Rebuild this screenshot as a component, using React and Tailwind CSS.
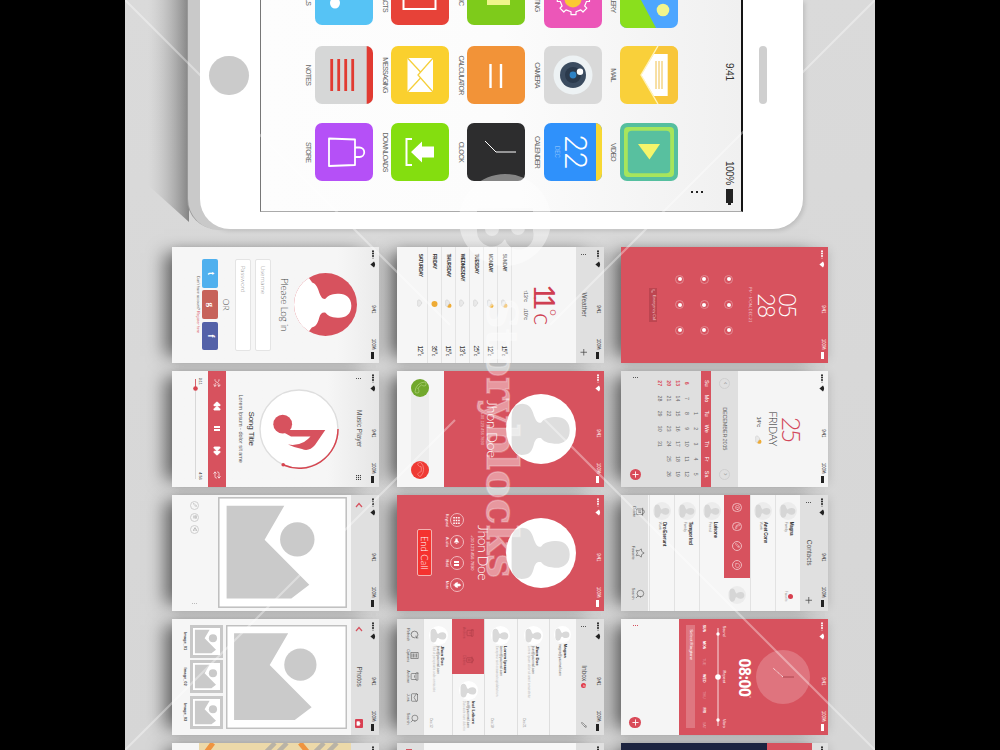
import React from "react";
import { Trash2, Star, Search, RotateCw, Archive, Mail, Pencil, Shuffle, Rewind, FastForward, Repeat, Phone, Info, MessageCircle, Mic, Camera, Share2 } from "lucide-react";

const RED = "#d7525e";

/* ---------- tablet ---------- */

function AppIcon({ label, bg, first, children }) {
  return (
    <div className={"flex h-[76.3px] w-[58px] flex-col items-center " + (first || "")}>
      <div className={"h-[58px] w-[58px] shrink-0 overflow-hidden rounded-[7px] " + bg}>
        <svg viewBox="0 0 58 58" className="block h-[58px] w-[58px]">{children}</svg>
      </div>
      <div className="flex h-[12px] items-center whitespace-nowrap text-[7px] leading-none tracking-[-0.75px] text-[#666]">{label}</div>
    </div>
  );
}

function TabletApps() {
  return (
    <div className="ml-[-31px] grid grid-cols-[77px_77px_58px]">
      <AppIcon label="GALLERY" bg="bg-[#4da6ff]" first="ml-px">
        <path d="M0 52 L30 37 L58 22 V58 H0Z" fill="#8adf1d" /><circle cx="40" cy="15" r="6.3" fill="#f2f58c" />
      </AppIcon>
      <AppIcon label="MAIL" bg="bg-[#f9d03a]">
        <path d="M0 0H58V19.5L29 37L0 19.5Z" fill="#f8c63a" />
        <path d="M0 20 L29 37 L58 20" fill="none" stroke="#fff3b8" strokeWidth="1.4" />
        <path d="M8 10.3H50V24L29 36.5L8 24Z" fill="#fff" />
        <path d="M15 16H43M15 19H43M15 22H43" stroke="#efc04a" strokeWidth="1" />
      </AppIcon>
      <AppIcon label="VIDEO" bg="bg-[#55bf9f]">
        <rect x="4" y="4" width="50" height="50" rx="4" fill="#a7e55c" />
        <rect x="7.8" y="7.8" width="42.4" height="42.4" rx="4" fill="#58c09f" />
        <path d="M21 18L36.5 28.5L21 40Z" fill="#f4f56a" />
      </AppIcon>
      <AppIcon label="SETTING" bg="bg-[#ec56b8]" first="ml-px">
        <circle cx="29" cy="29" r="8.5" fill="#fbc834" />
        <path d="M26.500 15.500V12.500H31.500V15.500L36 17.300L38.200 15.200L42 19L39.900 21.200L41.700 26H44.700V31H41.700L39.900 36L42 38.200L38.200 42L36 39.900L31.500 41.700V44.700H26.500V41.700L22 39.900L19.800 42L16 38.200L18.100 36L16.300 31H13.300V26H16.300L18.100 21.200L16 19L19.800 15.200L22 17.300Z" fill="none" stroke="#fff" strokeWidth="1.2" strokeLinejoin="round" />
      </AppIcon>
      <AppIcon label="CAMERA" bg="bg-[#d9d9d9]">
        <circle cx="29" cy="29" r="19.5" fill="#edf2f4" /><circle cx="29" cy="29" r="13" fill="#3b4c60" />
        <circle cx="29" cy="29" r="8" fill="#2b3a4c" /><circle cx="29" cy="29" r="3.4" fill="#2d82c4" /><circle cx="25.7" cy="22" r="3.2" fill="#fff" />
      </AppIcon>
      <AppIcon label="CALENDER" bg="bg-[#2f91fb]">
        <rect width="58" height="6" fill="#f7d833" />
        <text x="12" y="37" fontFamily="Roboto" fontWeight="300" fontSize="32" textLength="34" lengthAdjust="spacingAndGlyphs" fill="#fff">22</text>
        <text x="23" y="47.500" fontFamily="Roboto" fontWeight="300" fontSize="7" textLength="12" lengthAdjust="spacingAndGlyphs" fill="#a6d0ff">DEC</text>
      </AppIcon>
      <AppIcon label="MUSIC" bg="bg-[#7ecb1b]" first="-ml-0.5">
        <path d="M24 15H38V20H30V35A5 5 0 1 1 24 30Z" fill="#eef58c" /><path d="M30 18H38V38H30Z" fill="#eef58c" />
      </AppIcon>
      <AppIcon label="CALCULATOR" bg="bg-[#f29338]">
        <path d="M18 24H42M18 34.5H42" stroke="#fff" strokeWidth="2.4" />
      </AppIcon>
      <AppIcon label="CLOCK" bg="bg-[#2d2d2e]">
        <path d="M18 40L29 29V9" stroke="#fff" strokeWidth="1" fill="none" />
      </AppIcon>
      <AppIcon label="CONTACTS" bg="bg-[#e74238]" first="-ml-0.5">
        <rect x="12" y="13.5" width="30" height="32" fill="none" stroke="#fff" strokeWidth="2" />
      </AppIcon>
      <AppIcon label="MESSAGING" bg="bg-[#fad02e]">
        <rect x="12" y="16" width="34" height="25.5" fill="#fff" />
        <path d="M12 16L29 31L46 16M12 41.5L26 28.5M46 41.5L32 28.5" stroke="#f5cf3c" strokeWidth="1.3" fill="none" />
      </AppIcon>
      <AppIcon label="DOWNLOADS" bg="bg-[#84de0f]">
        <path d="M16 37V42.5H42V37" stroke="#fff" strokeWidth="2" fill="none" />
        <path d="M23.5 15H34.5V27H39.5L29 38L18.500 27H23.500Z" fill="#fff" />
      </AppIcon>
      <AppIcon label="CALLS" bg="bg-[#56c3f5]" first="-ml-0.5">
        <ellipse cx="36" cy="38" rx="5.500" ry="5" fill="#fff" /><path d="M20 18Q20 34 33 40" stroke="#fff" strokeWidth="6" fill="none" />
      </AppIcon>
      <AppIcon label="NOTES" bg="bg-[#d6d7d7]">
        <rect width="58" height="6.3" fill="#e13a31" />
        <path d="M13 20.3H45M13 27.3H45M13 34.3H45M13 41.3H45" stroke="#e13a31" strokeWidth="2.8" />
      </AppIcon>
      <AppIcon label="STORE" bg="bg-[#b550f7]">
        <path d="M16.5 18H42L43 44H15.500Z" stroke="#fff" strokeWidth="1.8" fill="none" strokeLinejoin="round" />
        <path d="M24.500 18V13.500A4.700 4.700 0 0 1 34 13.500V18" stroke="#fff" strokeWidth="1.8" fill="none" />
      </AppIcon>
    </div>
  );
}

function Tablet() {
  return (
    <div className="h-[603px] w-[229px] rounded-r-[30px] bg-white shadow-[0_11px_0_1px_#c9c9c9,0_13px_0_0_#999,2px_-2px_4px_rgba(0,0,0,0.12)]">
      <div className="h-[60px] pt-[36px]">
        <div className="ml-[46px] h-[8px] w-[58px] rounded-full bg-[#cfcfcf]" />
      </div>
      <div className="h-[483px] w-[212px] overflow-hidden border-t-2 border-r border-b border-t-[#151515] border-r-[#aaa] border-b-[#777] bg-gradient-to-t from-[#fdfdfd] via-[#fcfcfc] to-[#f0f0f0]">
        <div className="flex h-[20px] items-center pt-[3px] pl-[63px] text-[10px] leading-none tracking-[-0.5px] text-[#333]">
          <span className="w-[98px]">9:41</span>
          <span className="w-[28px]">100%</span>
          <span className="h-[7px] w-[14px] bg-[#222]" /><span className="h-[3px] w-[2px] bg-[#222]" />
        </div>
        <div className="flex h-[43px] flex-col gap-[2.4px] pt-[18px] pl-[191px]">
          <i className="block h-[2.4px] w-[2.4px] bg-[#222]" /><i className="block h-[2.4px] w-[2.4px] bg-[#222]" /><i className="block h-[2.4px] w-[2.4px] bg-[#222]" />
        </div>
        <TabletApps />
      </div>
      <div className="ml-[55.5px] mt-[11px] h-[39.5px] w-[39.5px] rounded-full bg-[#cbcbcb]" />
    </div>
  );
}

/* ---------- shared phone parts ---------- */

function Status({ light }) {
  return (
    <div className={"flex h-[12px] shrink-0 items-center pr-[4px] pl-[3px] text-[4.5px] leading-none tracking-[-0.15px] " + (light ? "text-white" : "text-[#222]")}>
      <svg viewBox="0 0 18 6" className="h-[6px] w-[18px]" fill="currentColor">
        <circle cx="1.2" cy="3" r="1" /><circle cx="3.6" cy="3" r="1" /><circle cx="6" cy="3" r="1" /><circle cx="8.2" cy="3" r=".7" opacity=".5" />
        <path d="M11.5 2Q14.5 -.2 17.5 2L14.5 5.6Z" />
      </svg>
      <span className="flex-1 pl-[12px] text-center">9:41</span>
      <span className="pr-[2px]">100%</span>
      <span className={"h-[3px] w-[7px] " + (light ? "bg-white" : "bg-[#222]")} />
    </div>
  );
}

function Screen({ bg, light, children }) {
  return (
    <div className={"relative flex h-[207px] w-[116px] flex-col overflow-hidden font-['Liberation_Sans',sans-serif] " + bg}>
      <Status light={light} />
      {children}
    </div>
  );
}

function Slot({ children }) {
  return <div className="h-[207px] w-[115.5px] shadow-[0_14px_16px_-6px_rgba(0,0,0,0.5),0_-2px_10px_-2px_rgba(0,0,0,0.15)]">{children}</div>;
}

function Dots({ color = "bg-[#555]" }) {
  return (
    <div className="flex flex-col gap-[1px]">
      <i className={"block h-[1px] w-[1px] " + color} /><i className={"block h-[1px] w-[1px] " + color} /><i className={"block h-[1px] w-[1px] " + color} />
    </div>
  );
}

function Title({ children, left, right }) {
  return (
    <div className="flex h-[16px] shrink-0 items-center px-[7px] text-[#555]">
      <div className="flex w-[12px]">{left}</div>
      <div className="flex flex-1 items-center justify-center gap-[2px] text-[6.5px] leading-none">{children}</div>
      <div className="flex w-[12px] justify-end">{right}</div>
    </div>
  );
}

function Person({ size, body, back, wide }) {
  const id = "clip" + size + body.slice(1);
  return (
    <svg viewBox="0 0 100 100" style={{ width: size, height: size }} className="block shrink-0">
      <clipPath id={id}><circle cx="50" cy="50" r="50" /></clipPath>
      <circle cx="50" cy="50" r="50" fill={back} />
      <g clipPath={"url(#" + id + ")"}>
        <path d="M52 9C66 9 72 19 71 31C70 42 68 46 63 50C62 55 64 58 71 60C82 63 87 66 87 78Q86 92 70 92H34Q14 92 14 76C15 67 20 63 31 60C38 57 42 55 41 50C36 46 34 42 33 31C32 19 38 9 52 9Z" fill={body} />
        {wide && <path d="M14 72H87L100 82V100H0V82Z" fill={body} />}
      </g>
    </svg>
  );
}

const AddButton = () => (
  <div className="flex h-[11.5px] w-[11.5px] items-center justify-center rounded-full bg-[#d94a58]">
    <svg viewBox="0 0 8 8" className="h-[7px] w-[7px]"><path d="M4 .5V7.500M.5 4H7.500" stroke="#fff" strokeWidth="1" /></svg>
  </div>
);

const Back = () => <svg viewBox="0 0 6 8" className="h-[8px] w-[6px]"><path d="M5 1L1.5 4L5 7" fill="none" stroke="#d7525e" strokeWidth="1.2" /></svg>;
const Plus = () => <svg viewBox="0 0 8 8" className="h-[6.5px] w-[6.5px]"><path d="M4 0V8M0 4H8" stroke="#444" strokeWidth=".9" /></svg>;

/* ---------- row 1 ---------- */

function Lock() {
  return (
    <Screen bg="bg-[#d7525e]" light>
      <div className="flex h-[81px] flex-col items-center pt-[18px] font-['Lato'] text-[23px] font-light leading-[21.5px] tracking-[-2px] text-white">
        <div>05</div><div>28</div>
        <div className="mt-[2px] whitespace-nowrap text-[4.2px] leading-[5px] tracking-[-0.1px]">PM - MON, DEC 21</div>
      </div>
      <div className="mx-auto grid grid-cols-3 gap-x-[16.5px] gap-y-[15.5px] pt-[2px]">
        {Array.from({ length: 9 }, (_, i) => (
          <div key={i} className="flex h-[9px] w-[9px] items-center justify-center rounded-full border border-[#e28a92]"><i className="block h-[4.2px] w-[4.2px] rounded-full bg-white" /></div>
        ))}
      </div>
      <div className="mx-auto mt-[18px] flex h-[8.5px] w-[34px] items-center justify-center gap-[2px] bg-[#bd4550] text-[3.6px] leading-none whitespace-nowrap text-[#f3d0d3]"><Phone size={4} />Emergency Call</div>
    </Screen>
  );
}

const DAYS = ["Su", "Mo", "Tu", "We", "Th", "Fr", "Sa"];

function CloudSun({ kind = "both" }) {
  return (
    <svg viewBox="0 0 12 8" className="h-[7px] w-[10px]">
      {kind !== "cloud" && <circle cx={kind === "sun" ? 6 : 8} cy={kind === "sun" ? 4 : 3} r={kind === "sun" ? 3.6 : 2.6} fill="#eeab35" />}
      {kind !== "sun" && <path d="M2 7.5A2 2 0 0 1 2.5 4A2.4 2.4 0 0 1 7 4.2A1.8 1.8 0 0 1 8 7.5Z" fill="#e9e9e9" stroke="#c4c4c4" strokeWidth=".5" />}
    </svg>
  );
}

function Calendar() {
  const cells = [null, null, ...Array.from({ length: 31 }, (_, i) => i + 1)];
  return (
    <Screen bg="bg-[#f5f5f5]">
      <div className="flex h-[78px] shrink-0 flex-col items-center pt-[12px]">
        <div className="font-['Lato'] text-[25px] font-light leading-[24px] tracking-[-2.5px] text-[#d2485a]">25</div>
        <div className="font-['Open_Sans'] text-[11.5px] font-light leading-[13px] tracking-[-0.3px] text-[#333]">FRIDAY</div>
        <div className="mt-[5px] flex items-center gap-[8px] pl-[4px] text-[6px] leading-none tracking-[-0.4px] text-[#444]">14°c <CloudSun /></div>
      </div>
      <div className="flex h-[117px] flex-1 flex-col bg-[#dfdfdf]">
        <div className="flex h-[27px] shrink-0 items-center justify-between px-[7px] text-[5.6px] tracking-[-0.2px] text-[#666]">
          <span className="flex h-[11px] w-[11px] items-center justify-center rounded-full border border-[#cfcfcf] text-[8px] leading-none text-[#999]">‹</span>
          DECEMBER 2015
          <span className="flex h-[11px] w-[11px] items-center justify-center rounded-full border border-[#cfcfcf] text-[8px] leading-none text-[#999]">›</span>
        </div>
        <div className="grid h-[10px] shrink-0 grid-cols-7 items-center bg-[#d7525e] px-[5px] text-center text-[5.4px] leading-none text-white">
          {DAYS.map((d) => <span key={d}>{d}</span>)}
        </div>
        <div className="grid auto-rows-[9px] grid-cols-7 items-center px-[5px] pt-[1px] text-center text-[5.2px] leading-none text-[#666]">
          {cells.map((n, i) => <span key={i} className={i % 7 === 0 ? "font-bold text-[#d94a58]" : ""}>{n}</span>)}
        </div>
        <div className="flex items-center justify-between px-[6.5px] pt-[14px]"><Dots /><AddButton /></div>
      </div>
    </Screen>
  );
}

function RoundIcon({ children, size = "h-[9.5px] w-[9.5px]", tone = "border-[#f0b8bd] text-white" }) {
  return <div className={"flex items-center justify-center rounded-full border " + size + " " + tone}>{children}</div>;
}

function ContactRow({ name, sub, badge }) {
  return (
    <div className="flex h-[25.3px] shrink-0 items-center border-b border-[#e2e2e2] pl-[7px] text-[4.6px] leading-[4.6px] text-[#333]">
      <Person size={18} body="#d6d6d6" back="#ececec" />
      <div className="ml-[2px] flex-1"><div className="font-bold tracking-[-0.2px] whitespace-nowrap">{name}</div><div className="text-[3.5px] text-[#777]">{sub}</div></div>
      {badge && <div className="mr-[9px] flex flex-col items-center text-[3px] text-[#999]"><i className="block h-[4.5px] w-[4.5px] rounded-full bg-[#d7404f]" />Favorite</div>}
    </div>
  );
}

function FootIcon({ icon, label }) {
  return <div className="flex w-[20px] flex-col items-center gap-[1px] text-[3.8px] leading-none text-[#555]">{icon}{label}</div>;
}

function Contacts() {
  return (
    <Screen bg="bg-[#e0e0e0]">
      <Title left={<Dots />} right={<Plus />}>Contacts</Title>
      <div className="h-[152px] shrink-0 bg-[#f6f6f6]">
        <ContactRow name="Magna" sub="Family" badge />
        <ContactRow name="Anet Conn" sub="Work" />
        <div className="flex h-[25.3px] items-center bg-[#f6f6f6]">
          <div className="flex h-full w-[83px] items-center justify-around bg-[#d7525e] px-[3px]">
            <RoundIcon><Info size={5} /></RoundIcon><RoundIcon><Phone size={5} /></RoundIcon><RoundIcon><Pencil size={5} /></RoundIcon><RoundIcon><MessageCircle size={5} /></RoundIcon>
          </div>
          <div className="pl-[8px]"><Person size={18} body="#d6d6d6" back="#ececec" /></div>
        </div>
        <ContactRow name="Luisone" sub="Friend" />
        <ContactRow name="Tempor Incl" sub="Family" />
        <ContactRow name="Oro Eserunt" sub="Work" />
      </div>
      <div className="flex items-center justify-between px-[7px] pt-[3px]">
        <FootIcon icon={<Trash2 size={9.5} strokeWidth={1.5} />} label="Delete" />
        <FootIcon icon={<Star size={10} strokeWidth={1.5} />} label="Favorite" />
        <FootIcon icon={<Search size={10} strokeWidth={1.5} />} label="Search" />
      </div>
    </Screen>
  );
}

function Alarm() {
  return (
    <Screen bg="bg-[#d7525e]" light>
      <div className="flex h-[137px] shrink-0 flex-col items-center pt-[6px] text-white">
        <svg viewBox="0 0 54 54" className="h-[54px] w-[54px]">
          <circle cx="27" cy="27" r="27" fill="#fff" opacity=".2" />
          <path d="M27 27V16" stroke="#9f3a45" strokeWidth=".8" /><path d="M27 27L18 37" stroke="#fff" strokeWidth=".8" strokeDasharray="1.2 .6" />
        </svg>
        <div className="mt-[3px] flex items-start pl-[3px] font-['Open_Sans'] text-[15.5px] font-bold leading-[17px] tracking-[-0.4px]">08:00<span className="text-[6px] font-light leading-[9px]">''</span></div>
        <div className="mt-[10px] grid w-[102px] grid-cols-3 text-center text-[3.8px] leading-[4px]"><span className="text-left">Sound</span><span>Repeat</span><span className="text-right">Vibro</span></div>
        <svg viewBox="0 0 98 6" className="mt-[1px] h-[6px] w-[98px]"><path d="M0 3H98" stroke="#fff" strokeWidth=".8" /><circle cx="6" cy="3" r="1.7" fill="#fff" /><circle cx="49" cy="3" r="2.8" fill="#fff" /><circle cx="92" cy="3" r="1.7" fill="#fff" /></svg>
        <div className="mt-[9px] flex w-[104px] justify-between text-[3.6px] leading-[5px]">
          <b>SUN</b><b>MON</b><span className="opacity-40">TUE</span><b>WED</b><span className="opacity-40">THU</span><b>FRI</b><span className="opacity-40">SAT</span>
        </div>
        <div className="mt-[6px] flex h-[9.5px] w-[103px] items-center bg-[#df7680] pl-[4px] text-[4.4px] leading-none">Select Ringtone</div>
      </div>
      <div className="flex h-[58px] items-end justify-between bg-[#f5f5f5] px-[6.5px] pb-[8px]"><div className="pb-[4px]"><Dots color="bg-[#d7525e]" /></div><AddButton /></div>
    </Screen>
  );
}

/* ---------- row 2 ---------- */

const FORECAST = [["SUNDAY", "both", "15"], ["MONDAY", "both", "12"], ["TUESDAY", "cloud", "25"], ["WEDNESDAY", "cloud", "13"], ["THURSDAY", "both", "15"], ["FRIDAY", "sun", "35"], ["SATURDAY", "cloud", "12"]];

function Weather() {
  return (
    <Screen bg="bg-[#e0e0e0]">
      <Title left={<Dots />} right={<Plus />}>Weather</Title>
      <div className="flex h-[64px] shrink-0 flex-col items-center bg-[#f6f6f6] pt-[17px] text-[#cf3f52]">
        <div className="flex items-start font-['Lato'] text-[29px] leading-[28px] tracking-[-7px]">11<span className="mt-[-1px] ml-[5px] text-[18px] font-light leading-[20px] tracking-[-1px]">°</span><span className="mt-px ml-[-2px] text-[26px] font-light tracking-normal">c</span></div>
        <div className="flex gap-[6px] text-[5.4px] leading-[8px] tracking-[-0.3px] text-[#555]"><span>↑13°c</span><span>↓10°c</span></div>
      </div>
      <div className="flex-1 bg-[#f6f6f6]">
        {FORECAST.map(([d, k, t]) => (
          <div key={d} className="grid h-[14px] grid-cols-[1fr_12px_1fr] items-center border-t border-[#e4e4e4] px-[7px] text-[4.6px] leading-none text-[#333]">
            <span className="font-bold tracking-[-0.2px]">{d}</span><CloudSun kind={k} /><span className="text-right text-[6.4px] tracking-[-0.5px]">{t}°<small className="text-[5px]">c</small></span>
          </div>
        ))}
      </div>
    </Screen>
  );
}

function Incoming() {
  return (
    <Screen bg="bg-[#d7525e]" light>
      <div className="flex h-[148px] shrink-0 flex-col items-center pt-[16px] text-white">
        <Person size={70} body="#dedede" back="#fff" />
        <div className="mt-[6px] font-['Lato'] text-[14.5px] font-light leading-[15px] tracking-[-0.4px]">Jhon Doe</div>
        <div className="text-[4px] leading-[5px] opacity-60">+00 123 456 7890</div>
      </div>
      <div className="flex flex-1 items-center bg-[#f6f6f6] px-[8px]">
        <div className="flex h-[18px] w-full items-center justify-between rounded-full bg-[#ededed]">
          <div className="flex h-[18px] w-[18px] items-center justify-center rounded-full bg-[#71a82c] text-[#c5e29b]"><Phone size={13} strokeWidth={1} /></div>
          <div className="flex h-[18px] w-[18px] rotate-[135deg] items-center justify-center rounded-full bg-[#ef3a34] text-[#ffb0ad]"><Phone size={13} strokeWidth={1} /></div>
        </div>
      </div>
    </Screen>
  );
}

const Keypad = () => <svg viewBox="0 0 8 8" className="h-[7px] w-[7px]"><path d="M0 1.200H8M0 4H8M0 6.800H8" stroke="#fff" strokeWidth="1.800" strokeDasharray="1.800 1.300" /></svg>;
const Speaker = () => <svg viewBox="0 0 8 8" className="h-[7px] w-[7px]"><path d="M.5 2.800H2.500L5 .8V7.200L2.500 5.200H.5ZM6 2.500Q7.500 4 6 5.500" fill="#fff" /></svg>;

function ActiveCall() {
  const items = [[<Keypad />, "Keypad"], [<Speaker />, "Audio"], [<span className="flex gap-[1.5px]"><i className="block h-[5.500px] w-[1.500px] bg-white" /><i className="block h-[5.500px] w-[1.500px] bg-white" /></span>, "Hold"], [<Mic size={8} fill="white" />, "Mute"]];
  return (
    <Screen bg="bg-[#d7525e]" light>
      <div className="flex flex-col items-center pt-[16px] text-white">
        <Person size={70} body="#dedede" back="#fff" />
        <div className="mt-[15px] font-['Lato'] text-[14px] font-light leading-[16px] tracking-[-0.4px]">Jhon Doe</div>
        <div className="text-[4.4px] leading-[5px] opacity-80">+00 123 456 7890</div>
        <div className="mt-[6px] flex gap-[7.5px]">
          {items.map(([icon, label]) => (
            <div key={label} className="flex w-[14px] flex-col items-center text-[3.8px] leading-[6px]"><RoundIcon size="h-[14px] w-[14px]">{icon}</RoundIcon>{label}</div>
          ))}
        </div>
        <div className="mt-[12px] flex h-[15px] w-[47px] items-center justify-center rounded-[2px] border border-[#f3b2b0] bg-[#f5322f] font-['Lato'] text-[9.5px] font-light leading-none">End Call</div>
      </div>
    </Screen>
  );
}

function MailRow({ h, name, text, date, size = 19 }) {
  return (
    <div className={"flex shrink-0 items-center overflow-hidden border-b border-[#dedede] pl-[7px] text-[4.4px] leading-[4.4px] text-[#333] " + h}>
      <Person size={size} body="#d9d9d9" back="#fff" />
      <div className="ml-[1px] flex-1 whitespace-nowrap"><div className="font-bold">{name}</div><div className="text-[3.2px] leading-[4px] text-[#555]">{name.split(" ")[0].toLowerCase()}@yourmail.com</div>{text && <div className="text-[3px] leading-[4px] text-[#b5b5b5]">{text}</div>}</div>
      <div className="self-end pr-[7px] pb-[4px] text-[3px] text-[#888]">{date}</div>
    </div>
  );
}

const Lines = () => <svg viewBox="0 0 9 9" className="h-[9px] w-[9px]"><path d="M1.500 .8H7.500V8.200H1.500ZM2.500 2.500H6.500M2.500 4H6.500M2.500 5.500H6.500M2.500 7H6.500" fill="none" stroke="#555" strokeWidth=".6" /></svg>;

function Inbox() {
  return (
    <Screen bg="bg-[#e0e0e0]">
      <Title left={<Dots />} right={<Pencil size={6} />}>Inbox<span className="flex h-[5px] w-[5px] items-center justify-center rounded-full bg-[#e03a48] text-[3.5px] text-white">4</span></Title>
      <div className="h-[153px] shrink-0 bg-[#f6f6f6]">
        <MailRow h="h-[27px]" name="Magna" size={17} />
        <MailRow h="h-[32px]" name="Jhon Doe" text="Lorem ipsum dolor sit amet consectetur" date="Dec 21" />
        <MailRow h="h-[32.5px]" name="Lorem Ipsum" text="Excepteur sint occaecat cupidatat non" date="Dec 18" />
        <div className="flex h-[32px] overflow-hidden">
          <div className="flex w-[55px] shrink-0 items-center justify-around bg-[#d7525e] text-[3.5px] leading-none text-[#b03f4a]"><div className="flex flex-col items-center gap-px"><Archive size={8} />Archive</div><div className="flex flex-col items-center gap-px"><Trash2 size={8} />Delete</div></div>
          <div className="w-[90px] shrink-0"><MailRow h="h-[32px]" name="Incl Labore" text="Duis aute irure dolor in" /></div>
        </div>
        <MailRow h="h-[29px]" name="Jhon Doe" text="Sed ut perspiciatis unde omnis iste" date="Dec 12" />
      </div>
      <div className="flex items-center justify-between px-[6px] pt-[4px]">
        <FootIcon icon={<RotateCw size={9} strokeWidth={1.7} />} label="Refresh" /><FootIcon icon={<Lines />} label="Options" /><FootIcon icon={<Archive size={9} strokeWidth={1.5} />} label="Archive" /><FootIcon icon={<Mail size={9} strokeWidth={1.5} />} label="Junk" /><FootIcon icon={<Search size={9} strokeWidth={1.5} />} label="Search" />
      </div>
    </Screen>
  );
}

/* ---------- row 3 ---------- */

function Login() {
  return (
    <Screen bg="bg-gradient-to-t from-[#f6f6f6] from-80% to-[#ebebeb]">
      <div className="flex flex-col items-center pt-[10px]">
        <Person size={63} body="#ffffff" back={RED} wide />
        <div className="mt-[3px] font-['Lato'] text-[10px] font-light leading-[12px] tracking-[-0.2px] text-[#444]">Please Log in</div>
        <div className="mt-[8px] flex h-[15.5px] w-[92px] items-center rounded-[2px] border border-[#e4e4e4] bg-white pl-[6px] font-['Lato'] text-[6.5px] font-light text-[#888]">Username</div>
        <div className="mt-[4.5px] flex h-[15.5px] w-[92px] items-center rounded-[2px] border border-[#e4e4e4] bg-white pl-[6px] font-['Lato'] text-[6.5px] font-light text-[#888]">Password</div>
        <div className="mt-[4px] font-['Lato'] text-[8.5px] font-light leading-[10px] text-[#444]">OR</div>
        <div className="mt-[3px] flex gap-[2.5px] text-[9px] font-bold leading-none text-white">
          <div className="flex h-[16px] w-[28.7px] items-center justify-center rounded-[2px] bg-[#4fb0ee]">t</div>
          <div className="flex h-[16px] w-[28.7px] items-center justify-center rounded-[2px] bg-[#c7625a] font-['Liberation_Serif']">g</div>
          <div className="flex h-[16px] w-[28.7px] items-center justify-center rounded-[2px] bg-[#5361a8]">f</div>
        </div>
        <div className="mt-[2px] text-[3.7px] leading-[5px] whitespace-nowrap text-[#555]">Don't have account? <span className="text-[#d7525e]">Register here</span></div>
      </div>
    </Screen>
  );
}

function Music() {
  return (
    <Screen bg="bg-gradient-to-t from-[#f6f6f6] from-75% to-[#e6e6e6]">
      <Title left={<Dots />} right={<svg viewBox="0 0 5 5" className="h-[5px] w-[5px]"><path d="M0 .6H5M0 2.5H5M0 4.4H5" stroke="#333" strokeWidth="1" strokeDasharray="1.1 .85" /></svg>}>Music Player</Title>
      <div className="flex flex-col items-center pt-[11px]">
        <svg viewBox="0 0 82 82" className="h-[82px] w-[82px]">
          <circle cx="41" cy="41" r="39" fill="#fff" stroke="#dedede" strokeWidth="1.4" />
          <path d="M41 2A39 39 0 0 1 77 56.5" fill="none" stroke="#d7444f" strokeWidth="1.5" /><circle cx="76.8" cy="56.8" r="1.8" fill="#d7444f" />
          <circle cx="36.2" cy="57.3" r="9.4" fill="#d7525e" />
          <path d="M42 57V14.700L57 25Q64 31 61 38Q59.500 46 56.500 52Q58 43 54 36Q51 31.500 48.500 29.500V49L44 57Z" fill="#d7525e" />
        </svg>
        <div className="mt-[1px] text-[8px] leading-[11px] tracking-[-0.1px] text-[#333]">Song Title</div>
        <div className="mt-[1px] text-[5.5px] leading-[9px] whitespace-nowrap text-[#555]">Lorem Ipsum - dolor sit ame</div>
      </div>
      <div className="mt-[10px] flex h-[17.5px] shrink-0 items-center justify-between bg-[#d7525e] px-[8px] text-white">
        <Shuffle size={8} /><Rewind size={10} fill="white" strokeWidth={1} /><span className="flex gap-[1.6px]"><i className="block h-[6px] w-[2px] bg-white" /><i className="block h-[6px] w-[2px] bg-white" /></span><FastForward size={10} fill="white" strokeWidth={1} /><Repeat size={8} />
      </div>
      <div className="mt-[6px] flex justify-between px-[7px] text-[3.8px] leading-[5px] text-[#444]"><span>0:11</span><span>4:56</span></div>
      <svg viewBox="0 0 100 6" className="mx-auto mt-[-1px] h-[6px] w-[100px] shrink-0"><path d="M0 2.500H100" stroke="#ccc" strokeWidth=".7" /><path d="M0 2.500H9" stroke="#d7444f" strokeWidth=".8" /><circle cx="9.500" cy="2.500" r="2.300" fill="#d7444f" /></svg>
    </Screen>
  );
}

function Picture({ cls }) {
  return (
    <svg viewBox="0 0 111 129" preserveAspectRatio="none" className={cls}>
      <rect x=".8" y=".8" width="109.4" height="127.4" fill="#fff" stroke="#bebebe" strokeWidth="1.5" />
      <path d="M8.700 120.400V62.700L42.700 82.400L87.700 37.700L101.400 55.700V120.400Z" fill="#cacaca" /><circle cx="42.400" cy="49.700" r="17.200" fill="#cacaca" />
    </svg>
  );
}

function Photo() {
  const tone = "border-[#cfcfcf] text-[#999]";
  return (
    <Screen bg="bg-[#e0e0e0]">
      <Title left={<Back />} />
      <div className="flex-1 bg-[#f6f6f6] pt-[4px]">
        <Picture cls="mx-auto block h-[129px] w-[111px]" />
        <div className="flex items-center gap-[3.5px] pt-[19px] pr-[7px] pl-[6.5px]">
          <RoundIcon size="h-[8.5px] w-[8.5px]" tone={tone}><Pencil size={4} /></RoundIcon>
          <RoundIcon size="h-[8.5px] w-[8.5px]" tone={tone}><Trash2 size={4} /></RoundIcon>
          <RoundIcon size="h-[8.5px] w-[8.5px]" tone={tone}><Share2 size={4} /></RoundIcon>
          <div className="ml-auto"><Dots color="bg-[#bbb]" /></div>
        </div>
      </div>
    </Screen>
  );
}

function Thumb({ label }) {
  return (
    <div className="flex w-[33px] flex-col items-center">
      <div className="border-[3px] border-[#c8c8c8] bg-white p-[1px]"><svg viewBox="6 26 98 98" className="block h-[25px] w-[25px]"><path d="M8.700 120.400V62.700L42.700 82.400L87.700 37.700L101.400 55.700V120.400Z" fill="#cacaca" /><circle cx="42.400" cy="49.700" r="16" fill="#cacaca" /></svg></div>
      <div className="mt-[2px] text-[4px] font-bold leading-[5px] text-[#444]">{label}</div>
    </div>
  );
}

function Photos() {
  return (
    <Screen bg="bg-[#e0e0e0]">
      <Title left={<Back />} right={<div className="flex h-[8px] w-[9px] items-center justify-center rounded-[1px] bg-[#d94052] text-white"><Camera size={5} fill="white" /></div>}>Photos</Title>
      <div className="flex-1 bg-[#f6f6f6] pt-[4px]">
        <Picture cls="mx-auto block h-[121px] w-[104px]" />
        <div className="flex justify-between px-[6px] pt-[3px]"><Thumb label="Image_01" /><Thumb label="Image_02" /><Thumb label="Image_03" /></div>
      </div>
    </Screen>
  );
}

/* ---------- cropped screens ---------- */

function DarkEdge() {
  return (
    <Screen bg="bg-[#e0e0e0]">
      <div className="h-[4px] shrink-0" /><div className="h-[45px] shrink-0 bg-[#d7525e]" /><div className="flex-1 bg-[#1d2440]" />
    </Screen>
  );
}

function LightEdge() {
  return (
    <Screen bg="bg-[#e0e0e0]">
      <div className="h-[16px] shrink-0" /><div className="h-[152px] shrink-0 bg-[#f8f8f8]" /><div className="mt-[12px] ml-[6px] h-[6px] w-[4px] bg-[#d7525e]" />
    </Screen>
  );
}

function MapEdge() {
  return (
    <Screen bg="bg-[#e0e0e0]">
      <div className="h-[16px] shrink-0" />
      <svg viewBox="0 0 116 152" className="h-[152px] w-[116px] shrink-0"><rect width="116" height="152" fill="#ecd9a9" /><path d="M0 51L12 41M0 138L12 147" stroke="#ef9440" strokeWidth="5" /><path d="M0 14L12 26M0 27L12 39M0 64L12 76M0 76L12 88" stroke="#b9b3a6" strokeWidth="4.500" /></svg>
      <div className="flex-1 bg-[#f6f6f6]" />
    </Screen>
  );
}

/* ---------- overlay ---------- */

function Watermark() {
  return (
    <svg viewBox="0 0 750 750" className="pointer-events-none absolute inset-0 h-[750px] w-[750px]">
      <g stroke="#fff" strokeOpacity=".36" strokeWidth="2.2"><path d="M0 0L325 325M420 420L750 750M0 750L325 425M412 338L750 0" /></g>
      <g fill="#fff" fillOpacity=".42">
        <path fillRule="evenodd" d="M220 324A46 46 0 1 1 220 416A46 46 0 1 1 220 324ZM208 342V398H231A15 15 0 0 0 239 370A14 14 0 0 0 231 342ZM220 350H228A6 6 0 0 1 228 364H220ZM220 376H229A6 6 0 0 1 229 390H220Z" />
        <text x="298" y="388" fontFamily="'DejaVu Serif'" fontWeight="700" fontSize="43" textLength="280" lengthAdjust="spacingAndGlyphs" stroke="#fff" strokeOpacity=".25" strokeWidth="1.500">Storyblocks</text>
      </g>
    </svg>
  );
}

export default function App() {
  const screens = [Lock, Calendar, Contacts, Alarm, DarkEdge, Weather, Incoming, ActiveCall, Inbox, LightEdge, Login, Music, Photo, Photos, MapEdge];
  return (
    <div className="flex h-[750px] w-full justify-center overflow-hidden bg-black font-['Liberation_Sans',sans-serif]">
      <div className="relative flex h-[750px] w-[750px] shrink-0 rotate-90 overflow-hidden bg-gradient-to-r from-[#dadada] to-[#d6d6d6]">
        <svg viewBox="0 0 230 60" className="absolute top-[686px] left-0 h-[60px] w-[230px]">
          <defs><linearGradient id="cast" x1="0" y1="0" x2="0" y2="1"><stop offset="0" stopColor="#555" stopOpacity=".65" /><stop offset=".3" stopColor="#777" stopOpacity=".35" /><stop offset=".68" stopColor="#aaa" stopOpacity="0" /></linearGradient></defs>
          <path d="M0 0H222L168 60H0Z" fill="url(#cast)" />
        </svg>
        <div className="relative w-[229px] shrink-0 pt-[72px]"><Tablet /></div>
        <div className="relative ml-[17.7px] grid shrink-0 auto-rows-[207px] grid-cols-[repeat(5,116px)] gap-x-[8px] gap-y-[17.7px] pt-[46.7px]">
          {screens.map((S, i) => <Slot key={i}><S /></Slot>)}
        </div>
        <Watermark />
      </div>
    </div>
  );
}
